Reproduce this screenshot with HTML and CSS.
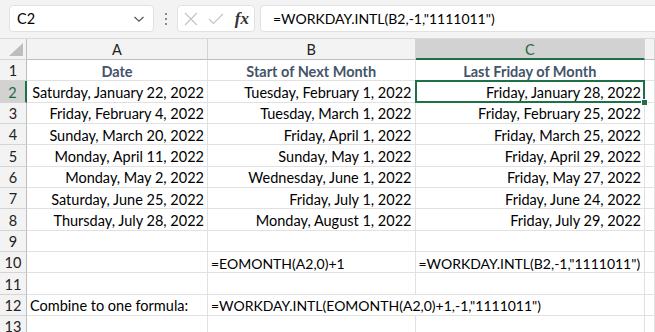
FILE: index.html
```html
<!DOCTYPE html>
<html>
<head>
    <title>Last Friday of Month</title>
    <link rel="stylesheet" href="styles.css">
</head>
<body>
    <div class="toolbar">
        <div class="namebox">
            <span>C2</span>
            <svg class="chevron" width="12" height="8" viewBox="0 0 12 8"><path d="M1.5 2 L6 6.2 L10.5 2" fill="none" stroke="#555" stroke-width="1.2"/></svg>
        </div>
        <div class="dots"><i></i><i></i><i></i></div>
        <div class="fxbox">
            <svg width="14" height="14" viewBox="0 0 14 14"><path d="M1 1 L13 13 M13 1 L1 13" stroke="#c4c4c4" stroke-width="1.2" fill="none"/></svg>
            <svg width="16" height="12" viewBox="0 0 16 12"><path d="M1 6 L5.5 10.5 L15 1" stroke="#c4c4c4" stroke-width="1.2" fill="none"/></svg>
            <span class="fx">fx</span>
        </div>
        <div class="formula">=WORKDAY.INTL(B2,-1,"1111011")</div>
    </div>

    <div class="sheet">
        <div class="hd corner"><svg width="14" height="13" viewBox="0 0 14 13"><path d="M14 0 L14 13 L0 13 Z" fill="#bdbdbd"/></svg></div>
        <div class="hd col">A</div>
        <div class="hd col">B</div>
        <div class="hd col sel-col">C</div>
        <div class="hd col"></div>

        <div class="hd row">1</div>
        <div class="cell title">Date</div>
        <div class="cell title">Start of Next Month</div>
        <div class="cell title">Last Friday of Month</div>
        <div class="cell"></div>

        <div class="hd row sel-row">2</div>
        <div class="cell num">Saturday, January 22, 2022</div>
        <div class="cell num">Tuesday, February 1, 2022</div>
        <div class="cell num active">Friday, January 28, 2022</div>
        <div class="cell"></div>

        <div class="hd row">3</div>
        <div class="cell num">Friday, February 4, 2022</div>
        <div class="cell num">Tuesday, March 1, 2022</div>
        <div class="cell num">Friday, February 25, 2022</div>
        <div class="cell"></div>

        <div class="hd row">4</div>
        <div class="cell num">Sunday, March 20, 2022</div>
        <div class="cell num">Friday, April 1, 2022</div>
        <div class="cell num">Friday, March 25, 2022</div>
        <div class="cell"></div>

        <div class="hd row">5</div>
        <div class="cell num">Monday, April 11, 2022</div>
        <div class="cell num">Sunday, May 1, 2022</div>
        <div class="cell num">Friday, April 29, 2022</div>
        <div class="cell"></div>

        <div class="hd row">6</div>
        <div class="cell num">Monday, May 2, 2022</div>
        <div class="cell num">Wednesday, June 1, 2022</div>
        <div class="cell num">Friday, May 27, 2022</div>
        <div class="cell"></div>

        <div class="hd row">7</div>
        <div class="cell num">Saturday, June 25, 2022</div>
        <div class="cell num">Friday, July 1, 2022</div>
        <div class="cell num">Friday, June 24, 2022</div>
        <div class="cell"></div>

        <div class="hd row">8</div>
        <div class="cell num">Thursday, July 28, 2022</div>
        <div class="cell num">Monday, August 1, 2022</div>
        <div class="cell num">Friday, July 29, 2022</div>
        <div class="cell"></div>

        <div class="hd row">9</div>
        <div class="cell"></div>
        <div class="cell"></div>
        <div class="cell"></div>
        <div class="cell"></div>

        <div class="hd row">10</div>
        <div class="cell"></div>
        <div class="cell fml">=EOMONTH(A2,0)+1</div>
        <div class="cell fml">=WORKDAY.INTL(B2,-1,"1111011")</div>
        <div class="cell"></div>

        <div class="hd row">11</div>
        <div class="cell"></div>
        <div class="cell"></div>
        <div class="cell"></div>
        <div class="cell"></div>

        <div class="hd row">12</div>
        <div class="cell">Combine to one formula:</div>
        <div class="cell fml wide">=WORKDAY.INTL(EOMONTH(A2,0)+1,-1,"1111011")</div>
        <div class="cell"></div>

        <div class="hd row">13</div>
        <div class="cell"></div>
        <div class="cell"></div>
        <div class="cell"></div>
        <div class="cell"></div>
    </div>
</body>
</html>
```

FILE: styles.css
```css
body {
    margin: 0;
    font-family: Lato, "Liberation Sans", sans-serif;
    font-size: 14.5px;
    color: #000;
    background-color: #fff;
    overflow: hidden;
}

.toolbar {
    display: flex;
    align-items: flex-start;
    height: 39px;
    padding: 5px 0 0 9px;
    box-sizing: border-box;
    background-color: #f3f3f3;
    border-bottom: 1px solid #dadada;
}

.namebox,
.fxbox,
.formula {
    height: 27px;
    box-sizing: border-box;
    background-color: #fff;
    border: 1px solid #e1e1e1;
    border-radius: 4px;
    display: flex;
    align-items: center;
}

.namebox {
    width: 145px;
    padding: 0 8px 0 7px;
    justify-content: space-between;
    font-size: 14.5px;
}

.dots {
    width: 23px;
    display: flex;
    flex-direction: column;
    align-items: center;
    gap: 3px;
    padding-top: 8px;
}

.dots i {
    width: 2px;
    height: 2px;
    background-color: #8a8a8a;
}

.fxbox {
    width: 78px;
    padding: 0 5px 0 6px;
    gap: 10px;
}

.fx {
    font-family: "Liberation Serif", serif;
    font-style: italic;
    font-weight: bold;
    font-size: 17px;
    color: #333;
    margin-left: 1px;
}

.formula {
    flex: 1;
    margin-left: 5px;
    padding-left: 12px;
    border-right: none;
    border-radius: 4px 0 0 4px;
    font-size: 14px;
}

.sheet {
    display: grid;
    grid-template-columns: 27px 181px 207.5px 229.5px 1fr;
    grid-template-rows: 21px repeat(13, 21.35px);
}

.hd {
    background-color: #f3f3f3;
    border-right: 1px solid #d4d4d4;
    border-bottom: 1px solid #d4d4d4;
    color: #222;
    display: flex;
    align-items: center;
    justify-content: center;
    box-sizing: border-box;
    padding-top: 1px;
}

.corner {
    justify-content: flex-end;
    align-items: flex-end;
    padding: 0 3px 3px 0;
    border-right-color: #bdbdbd;
}

.col {
    border-bottom-color: #bdbdbd;
}

.row {
    border-right-color: #bdbdbd;
}

.sel-col {
    background-color: #d2d2d2;
    color: #1e6b3f;
    border-bottom: 2px solid #1e7145;
}

.sel-row {
    background-color: #d2d2d2;
    color: #1e6b3f;
    border-right: 2px solid #1e7145;
}

.cell {
    border-right: 1px solid #e1e1e1;
    border-bottom: 1px solid #e1e1e1;
    box-sizing: border-box;
    display: flex;
    align-items: center;
    padding: 2px 3px 0;
    white-space: nowrap;
    overflow: hidden;
}

.title {
    justify-content: center;
    font-weight: bold;
    color: #44546a;
}

.num {
    justify-content: flex-end;
}

.fml {
    font-size: 14px;
}

.wide {
    grid-column: span 2;
}

.active {
    position: relative;
    overflow: visible;
}

.active::after {
    content: "";
    position: absolute;
    left: -1px;
    top: -1px;
    right: -1px;
    bottom: -1px;
    border: 2px solid #1e7145;
}

.active::before {
    content: "";
    position: absolute;
    right: -4px;
    bottom: -4px;
    width: 5px;
    height: 5px;
    background-color: #1e7145;
    border: 1px solid #fff;
    z-index: 1;
}
```
